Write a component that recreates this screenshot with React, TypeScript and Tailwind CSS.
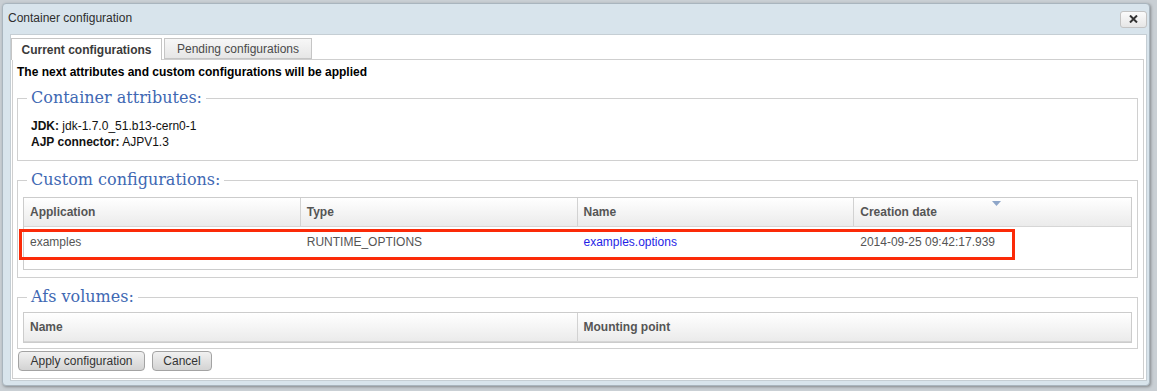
export default function App() {
  const legend =
    "ml-[4px] px-[4px] font-['DejaVu_Serif','Liberation_Serif',serif] text-[16px] leading-[20px] text-[#4068b3]";
  const fieldset = "border border-[#d0d0d0] px-[5px]";
  const headCell =
    "h-full flex items-center pl-[6px] font-bold text-[#555] border-r border-[#d2d2d2] last:border-r-0";
  return (
    <div className="w-[1157px] h-[391px] overflow-hidden bg-[#c9cfd4] pt-[3px] pl-[2px] font-['Liberation_Sans',Arial,sans-serif] text-[12px]">
      <div className="w-[1148px] h-[383px] rounded-[4px] border border-[#a9b5be] bg-[#d8e4ec] shadow-[1px_1px_3px_rgba(0,0,0,0.35)] flex flex-col">
        {/* Title bar */}
        <div className="h-[30px] shrink-0 flex items-center justify-between pl-[5px] pr-[2px]">
          <span className="text-[12px] text-[#2e2e2e] -mt-[2px]">Container configuration</span>
          <button className="w-[27px] h-[17px] rounded-[3px] border border-[#c3c3c3] bg-linear-to-b from-[#fbfbfb] to-[#e6e6e6] flex items-center justify-center">
            <svg width="9" height="8" viewBox="0 0 9 8">
              <path d="M1 0.5 L8 7.5 M8 0.5 L1 7.5" stroke="#333" strokeWidth="2" />
            </svg>
          </button>
        </div>

        {/* White tab widget */}
        <div className="flex-1 ml-[7px] mr-[2px] mb-[4px] bg-white border border-[#c5ced4] flex flex-col">
          <div className="flex gap-[2px] pt-[3px] relative z-10">
            <div className="h-[22px] -mb-px w-[151px] flex items-center justify-center border border-b-0 border-[#c5c5c5] bg-white font-bold text-[#3a3a3a]">
              Current configurations
            </div>
            <div className="h-[21px] w-[148px] flex items-center justify-center border border-[#c5c5c5] bg-linear-to-b from-[#f7f7f7] to-[#e6e6e6] text-[#4a4a4a]">
              Pending configurations
            </div>
          </div>

          {/* Panel */}
          <div className="flex-1 ml-[1px] mr-[2px] mb-[1px] border border-[#cfcfcf] pl-[4px] pr-[5px] flex flex-col">
            <div className="pt-[4px] leading-[16px] font-bold text-black">
              The next attributes and custom configurations will be applied
            </div>

            {/* Container attributes */}
            <fieldset className={`mt-[8px] ${fieldset} pt-[10px] pb-[10px]`}>
              <legend className={legend}>Container attributes:</legend>
              <div className="pl-[8px] leading-[16px] text-[#111]">
                <div>
                  <span className="font-bold">JDK:</span> jdk-1.7.0_51.b13-cern0-1
                </div>
                <div>
                  <span className="font-bold">AJP connector:</span> AJPV1.3
                </div>
              </div>
            </fieldset>

            {/* Custom configurations */}
            <fieldset className={`mt-[9px] ${fieldset} pt-[7px] pb-[7px]`}>
              <legend className={legend}>Custom configurations:</legend>
              <div className="border border-[#cccccc]">
                <div className="h-[29px] grid grid-cols-4 border-b border-[#d6d6d6] bg-linear-to-b from-white to-[#ebebeb]">
                  <div className={headCell}>Application</div>
                  <div className={headCell}>Type</div>
                  <div className={headCell}>Name</div>
                  <div className={`${headCell} relative`}>
                    Creation date
                    <svg
                      className="absolute left-[138px] top-[3px]"
                      width="9"
                      height="5"
                      viewBox="0 0 9 5"
                    >
                      <path d="M0 0 H9 L4.5 5 Z" fill="#8ea6c9" />
                    </svg>
                  </div>
                </div>
                <div className="h-[42px] relative">
                  <div className="grid grid-cols-4 pt-[8px] leading-[14px] text-[#555]">
                    <div className="pl-[6px]">examples</div>
                    <div className="pl-[6px]">RUNTIME_OPTIONS</div>
                    <div className="pl-[6px] text-[#1f1fe6]">examples.options</div>
                    <div className="pl-[6px]">2014-09-25 09:42:17.939</div>
                  </div>
                  <div className="absolute left-[-5px] top-[2px] w-[996px] h-[31px] border-[3px] border-[#fb2a08]" />
                </div>
              </div>
            </fieldset>

            {/* Afs volumes */}
            <fieldset className={`mt-[9px] ${fieldset} pt-[5px] pb-[5px]`}>
              <legend className={legend}>Afs volumes:</legend>
              <div className="border border-[#cccccc]">
                <div className="h-[29px] grid grid-cols-2 border-b border-[#d6d6d6] bg-linear-to-b from-white to-[#ebebeb]">
                  <div className={headCell}>Name</div>
                  <div className={headCell}>Mounting point</div>
                </div>
              </div>
            </fieldset>

            <div className="mt-[2px] pl-[1px] flex gap-[7px]">
              <button className="w-[127px] h-[20px] rounded-[4px] border border-[#a3a3a3] bg-linear-to-b from-[#f1f1f1] to-[#d3d3d3] text-[#333] text-[12px] leading-[18px]">
                Apply configuration
              </button>
              <button className="w-[60px] h-[20px] rounded-[4px] border border-[#a3a3a3] bg-linear-to-b from-[#f1f1f1] to-[#d3d3d3] text-[#333] text-[12px] leading-[18px]">
                Cancel
              </button>
            </div>
          </div>
        </div>
      </div>
    </div>
  );
}
